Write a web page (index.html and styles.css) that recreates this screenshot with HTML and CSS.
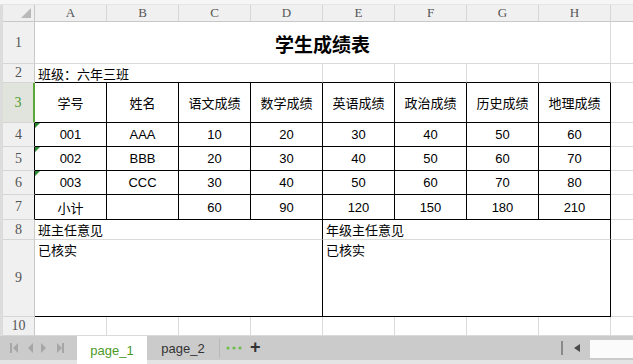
FILE: index.html
```html
<!DOCTYPE html>
<html lang="zh">
<head>
<meta charset="utf-8">
<title>学生成绩表</title>
<link rel="stylesheet" href="styles.css">
</head>
<body>
<div class="app">
  <div class="topband"></div>
  <div class="main">
    <div class="strip"></div>
    <div class="sheet">
      <div class="corner"><svg width="10" height="10" viewBox="0 0 10 10"><polygon points="10,0 10,10 0,10" fill="#b9b9b9"/></svg></div>
      <div class="ch">A</div><div class="ch">B</div><div class="ch">C</div><div class="ch">D</div>
      <div class="ch">E</div><div class="ch">F</div><div class="ch">G</div><div class="ch">H</div>
      <div class="ch last"></div>

      <div class="rh">1</div>
      <div class="c span8 title">学生成绩表</div>
      <div class="c extra"></div>

      <div class="rh">2</div>
      <div class="c span4 left bb">班级：六年三班</div>
      <div class="c bb"></div><div class="c bb"></div><div class="c bb"></div><div class="c bb"></div>
      <div class="c extra"></div>

      <div class="rh sel">3</div>
      <div class="c t">学号</div><div class="c t">姓名</div><div class="c t">语文成绩</div><div class="c t">数学成绩</div>
      <div class="c t">英语成绩</div><div class="c t">政治成绩</div><div class="c t">历史成绩</div><div class="c t">地理成绩</div>
      <div class="c extra"></div>

      <div class="rh rb">4</div>
      <div class="c t flag">001</div><div class="c t">AAA</div><div class="c t">10</div><div class="c t">20</div>
      <div class="c t">30</div><div class="c t">40</div><div class="c t">50</div><div class="c t">60</div>
      <div class="c extra"></div>

      <div class="rh rb">5</div>
      <div class="c t flag">002</div><div class="c t">BBB</div><div class="c t">20</div><div class="c t">30</div>
      <div class="c t">40</div><div class="c t">50</div><div class="c t">60</div><div class="c t">70</div>
      <div class="c extra"></div>

      <div class="rh rb">6</div>
      <div class="c t flag">003</div><div class="c t">CCC</div><div class="c t">30</div><div class="c t">40</div>
      <div class="c t">50</div><div class="c t">60</div><div class="c t">70</div><div class="c t">80</div>
      <div class="c extra"></div>

      <div class="rh rb">7</div>
      <div class="c t">小计</div><div class="c t"></div><div class="c t">60</div><div class="c t">90</div>
      <div class="c t">120</div><div class="c t">150</div><div class="c t">180</div><div class="c t">210</div>
      <div class="c extra"></div>

      <div class="rh">8</div>
      <div class="c span4 left br">班主任意见</div>
      <div class="c span4 left br">年级主任意见</div>
      <div class="c extra"></div>

      <div class="rh">9</div>
      <div class="c span4 left top br bb">已核实</div>
      <div class="c span4 left top br bb">已核实</div>
      <div class="c extra"></div>

      <div class="rh">10</div>
      <div class="c"></div><div class="c"></div><div class="c"></div><div class="c"></div>
      <div class="c"></div><div class="c"></div><div class="c"></div><div class="c"></div>
      <div class="c extra"></div>
    </div>
  </div>
  <div class="tabbar">
    <div class="nav">
      <svg width="60" height="12" viewBox="0 0 60 12">
        <rect x="6" y="1" width="2" height="10" fill="#a6a6a6"/>
        <polygon points="14,1 14,11 9,6" fill="#a6a6a6"/>
        <polygon points="29,1 29,11 24,6" fill="#a6a6a6"/>
        <polygon points="37,1 37,11 42,6" fill="#a6a6a6"/>
        <polygon points="53,1 53,11 58,6" fill="#a6a6a6"/>
        <rect x="58" y="1" width="2" height="10" fill="#a6a6a6"/>
      </svg>
    </div>
    <div class="tab active">page_1</div>
    <div class="tab">page_2</div>
    <div class="sep"></div>
    <div class="more"><svg width="16" height="4" viewBox="0 0 16 4"><circle cx="2" cy="2" r="1.6" fill="#6cc04a"/><circle cx="8" cy="2" r="1.6" fill="#6cc04a"/><circle cx="14" cy="2" r="1.6" fill="#6cc04a"/></svg></div>
    <div class="plus">+</div>
    <div class="spacer"></div>
    <div class="vsep"></div>
    <div class="larrow"><svg width="6" height="8" viewBox="0 0 6 8"><polygon points="6,0 6,8 0,4" fill="#4a4a4a"/></svg></div>
    <div class="track"></div>
  </div>
</div>
</body>
</html>
```
FILE: styles.css
```css
* { box-sizing: border-box; }
html, body { margin: 0; padding: 0; }
body {
  width: 633px;
  height: 364px;
  overflow: hidden;
  background: #ffffff;
  font-family: "Liberation Sans", "Noto Sans CJK SC", sans-serif;
  font-size: 13px;
  color: #000;
}
.app { display: flex; flex-direction: column; width: 633px; height: 364px; }
.topband { height: 5px; background: #f6f6f6; border-bottom: 1px solid #e4e4e4; }
.main { display: flex; height: 331px; }
.strip { width: 3px; background: #dcdcdc; }
.sheet {
  flex: 1;
  display: grid;
  grid-template-columns: 32px repeat(8, 72px) 1fr;
  grid-template-rows: 17px 42px 19px 40px 24px 24px 24px 25px 20px 77px 19px;
  background: #fff;
}
.corner {
  background: #efefef;
  border-right: 1px solid #c8c8c8;
  border-bottom: 1px solid #c8c8c8;
  display: flex;
  justify-content: flex-end;
  align-items: flex-end;
  padding: 0 3px 3px 0;
}
.ch {
  background: #f0f0f0;
  border-right: 1px solid #d6d6d6;
  border-bottom: 1px solid #c8c8c8;
  display: flex;
  align-items: center;
  justify-content: center;
  font-family: "Liberation Serif", serif;
  font-size: 13px;
  color: #555;
}
.ch.last { border-right: none; }
.rh {
  background: #f0f0f0;
  border-right: 1px solid #c8c8c8;
  border-bottom: 1px solid #d6d6d6;
  display: flex;
  align-items: center;
  justify-content: center;
  font-family: "Liberation Serif", serif;
  font-size: 14px;
  color: #555;
}
.rh.sel {
  background: #e0e4dc;
  color: #4c9a2a;
  border-right: 2px solid #5aa637;
}
.rh.rb { border-right-color: #000; }
.c {
  border-right: 1px solid #dadada;
  border-bottom: 1px solid #dadada;
  display: flex;
  align-items: center;
  justify-content: center;
  white-space: nowrap;
  position: relative;
}
.c.extra { border-right: none; }
.span8 { grid-column: span 8; }
.span4 { grid-column: span 4; }
.title {
  font-family: "Noto Sans CJK SC", sans-serif;
  font-weight: bold;
  font-size: 19px;
  padding-top: 2px;
}
.left { justify-content: flex-start; padding-left: 3px; }
.top { align-items: flex-start; padding-top: 0; }
.bb { border-bottom-color: #000; }
.br { border-right-color: #000; }
.t { border-right-color: #000; border-bottom-color: #000; }
.flag::before {
  content: "";
  position: absolute;
  left: 0;
  top: 0;
  border-top: 5px solid #2f8a2f;
  border-right: 5px solid transparent;
}
.tabbar {
  height: 28px;
  display: flex;
  align-items: stretch;
  background: #cbcbcb;
  border-bottom: 4px solid #e4e4e4;
}
.nav { width: 77px; display: flex; align-items: center; padding-left: 4px; }
.tab {
  width: 72px;
  display: flex;
  align-items: center;
  justify-content: center;
  font-family: "Liberation Sans", sans-serif;
  font-size: 13px;
  color: #333;
}
.tab.active {
  width: 70px;
  background: #ffffff;
  color: #4c9a2a;
  margin-bottom: -4px;
}
.sep { width: 1px; background: #b9b9b9; margin: 2px 0; }
.more {
  margin-left: 6px;
  display: flex;
  align-items: center;
}
.plus {
  margin-left: 8px;
  display: flex;
  align-items: center;
  font-size: 18px;
  font-weight: bold;
  color: #333;
  padding-bottom: 2px;
}
.spacer { flex: 1; }
.vsep { width: 2px; background: #8a8a8a; margin: 5px 0; }
.larrow { width: 27px; display: flex; align-items: center; justify-content: center; }
.track { width: 43px; background: #fbfbfb; margin: 4px 0 2px; }
```
